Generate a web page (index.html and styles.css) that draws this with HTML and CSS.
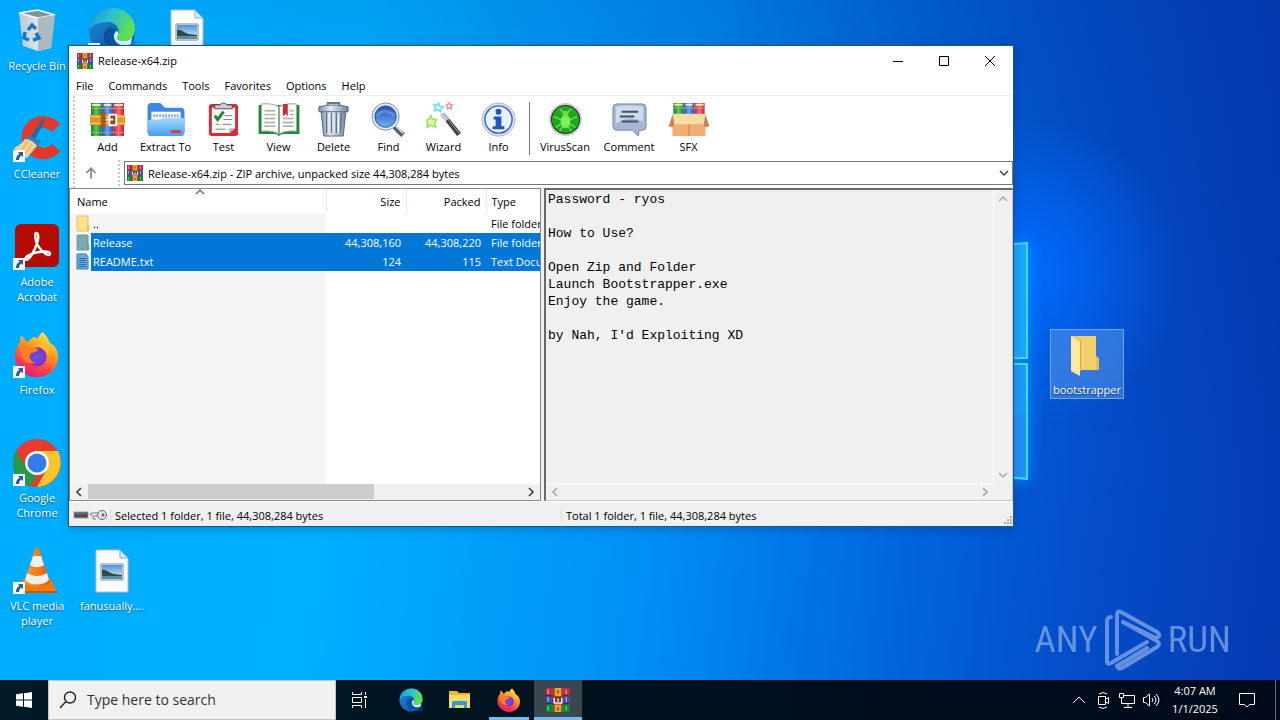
FILE: index.html
```html
<!DOCTYPE html>
<html lang="en">
<head>
<meta charset="utf-8">
<title>Release-x64.zip</title>
<link rel="stylesheet" href="styles.css">
</head>
<body>
<svg class="defs" aria-hidden="true">
  <defs>
    <linearGradient id="gBlue" x1="0" y1="0" x2="0" y2="1"><stop offset="0" stop-color="#a5ddff"/><stop offset="1" stop-color="#4a9df0"/></linearGradient>
    <linearGradient id="gMetal" x1="0" y1="0" x2="1" y2="0"><stop offset="0" stop-color="#7d91a8"/><stop offset=".4" stop-color="#e2eaf1"/><stop offset="1" stop-color="#71859c"/></linearGradient>
    <linearGradient id="gEdgeA" x1="0" y1="0" x2="1" y2=".4"><stop offset="0" stop-color="#1b8fd8"/><stop offset=".5" stop-color="#2cc0d2"/><stop offset="1" stop-color="#62e04e"/></linearGradient>
    <linearGradient id="gEdgeB" x1="0" y1="0" x2="1" y2="1"><stop offset="0" stop-color="#1b8ede"/><stop offset="1" stop-color="#0c4a94"/></linearGradient>
    <linearGradient id="gFox" x1=".8" y1="0" x2=".3" y2="1"><stop offset="0" stop-color="#fff04a"/><stop offset=".4" stop-color="#ff9a1e"/><stop offset=".75" stop-color="#ff3c4a"/><stop offset="1" stop-color="#e31587"/></linearGradient>
    <radialGradient id="gGlobe"><stop offset="0" stop-color="#5a5ae8"/><stop offset="1" stop-color="#8a2cc8"/></radialGradient>
    <linearGradient id="gCone" x1="0" y1="0" x2="1" y2="0"><stop offset="0" stop-color="#ffa02a"/><stop offset="1" stop-color="#e65c00"/></linearGradient>
    <linearGradient id="gLens" x1="0" y1="0" x2="0" y2="1"><stop offset="0" stop-color="#1f50b4"/><stop offset="1" stop-color="#74aef4"/></linearGradient>
    <linearGradient id="gSky" x1="0" y1="0" x2="0" y2="1"><stop offset="0" stop-color="#4f93e0"/><stop offset="1" stop-color="#e6f3fa"/></linearGradient>
    <linearGradient id="gBin" x1="0" y1="0" x2="1" y2="0"><stop offset="0" stop-color="#b9c9d6"/><stop offset=".6" stop-color="#e2e9ee"/><stop offset="1" stop-color="#a3afb8"/></linearGradient>
    <linearGradient id="gRed" x1="0" y1="0" x2="1" y2="0"><stop offset="0" stop-color="#c01838"/><stop offset=".5" stop-color="#ff6b80"/><stop offset="1" stop-color="#c01838"/></linearGradient>
    <linearGradient id="gGrn" x1="0" y1="0" x2="1" y2="0"><stop offset="0" stop-color="#137a2a"/><stop offset=".5" stop-color="#4fce62"/><stop offset="1" stop-color="#137a2a"/></linearGradient>
    <linearGradient id="gBlu" x1="0" y1="0" x2="1" y2="0"><stop offset="0" stop-color="#1b4cb4"/><stop offset=".5" stop-color="#64a4ff"/><stop offset="1" stop-color="#1b4cb4"/></linearGradient>
    <symbol id="rar" viewBox="0 0 16 16">
      <rect y="0" width="16" height="5" fill="#c52a45"/><rect y="5.300" width="16" height="5" fill="#3954ad"/><rect y="10.600" width="16" height="5.400" fill="#16823a"/>
      <path d="M1 1h1v3H1zM13 1h1v3h-1z" fill="#e89a72"/><path d="M1 6h1v3H1zM13 6h1v3h-1z" fill="#92a5e8"/><path d="M1 12h1v3H1zM13 12h1v3h-1z" fill="#4fd26b"/>
      <path d="M0 5.100h16M0 10.400h16" stroke="#43233d" stroke-width=".7"/>
      <path d="M5 0h6v16H5z" fill="#a85a19"/><path d="M6 0h4v16H6z" fill="#e8a33c"/>
      <path d="M4.500 5.500h7V11h-7z" fill="#7c3324"/><path d="M5.500 6.500V10h5V6.500M8 7v2" fill="none" stroke="#f6eee2"/>
      <path d="M8 1.500v2M8 13v2" stroke="#8b3e08"/>
    </symbol>
    <symbol id="edge" viewBox="0 0 48 48">
      <circle cx="24" cy="24" r="23" fill="url(#gEdgeB)"/>
      <path d="M1 23C3 8 15 1 25 1c13 0 22 10 22 21 0 8-6 12-12 12-4 0-7-2-6-4 5-7-1-15-9-15C11 15 4 18 1 23z" fill="url(#gEdgeA)"/>
      <path d="M19 22c-7 7-2 20 9 23 7 1 13-2 17-8-8 5-20 2-20-8 0-3 1-4 3-5-2-4-6-5-9-2z" fill="#0b5299"/>
      <path d="M27 22c-6 3-4 13 8 14 6 0 10-2 12-6v17H35C20 42 16 29 27 22z" fill="#0c5cad" opacity=".4"/>
      <path d="M29 30c-1 2 2 4 6 4 3 0 7-1 9-4l-1 7c-8 4-17 0-17-8 0-3 2-5 3-5 2 2 2 4 0 6z" fill="#d9f6fb"/>
    </symbol>
    <symbol id="fox" viewBox="0 0 48 48">
      <path d="M30 1c4 4 6 7 7 11 6 3 9 9 9 15 0 12-10 21-22 21S1 38 1 26c0-6 2-11 5-14l1-7c3 1 5 4 6 7l6-5c2-1 5 0 6 1 1-3 2-5 5-7z" fill="url(#gFox)"/>
      <circle cx="24" cy="27" r="10" fill="url(#gGlobe)"/>
      <path d="M4 16c7-2 11 0 14 1 5 0 6 1 7 3-3 3-6 2-8 4-2 3 0 8 5 9-8 3-15-3-15-11" fill="#ff7e1f"/>
      <path d="M22 16c7-1 12 3 13 10 2-4 2-9-2-13" fill="#ffbd2c"/>
    </symbol>
    <symbol id="shortcut" viewBox="0 0 12 12"><path d="M0 0h12v12H0z" fill="#f8fafc"/><path d="M5 2h5v5L8.300 5.400C6.500 7 6 8 6 10H3C3 7 4 5.300 6.600 3.700z" fill="#2459a4"/></symbol>
    <symbol id="picture" viewBox="0 0 48 48">
      <path d="M8 3h24l8 8v34H8z" fill="#fbfcfd" stroke="#b1bdc5"/><path d="M32 3v8h8z" fill="#d6e7f2" stroke="#8fb0c4"/>
      <path d="M13 17h22v16H13z" fill="#fff" stroke="#738ba0"/><path d="M14 18h20v14H14z" fill="url(#gSky)"/>
      <path d="M14 23c4-1 7 3 12 4l8 1v1H14z" fill="#2c4c44"/><path d="M14 29h20v3H14z" fill="#5c8eaa"/>
    </symbol>
    <symbol id="books" viewBox="0 0 36 36">
      <path d="M1 1h11v34H1z" fill="url(#gGrn)"/><path d="M12 1h12v34H12z" fill="url(#gBlu)"/><path d="M24 1h11v34H24z" fill="url(#gRed)"/>
      <path d="M2 2h9v2H2zM14 2h8v2h-8zM25 2h9v2h-9z" fill="#eee6ae"/><path d="M1 6h34v1H1zM1 31h34v1H1z" fill="#d3a843"/>
    </symbol>
    <symbol id="up" viewBox="0 0 12 12"><path d="M2 8l4-4 4 4" fill="none" stroke="currentColor" stroke-width="1.500"/></symbol>
    <symbol id="down" viewBox="0 0 12 12"><path d="M2 4l4 4 4-4" fill="none" stroke="currentColor" stroke-width="1.500"/></symbol>
    <symbol id="left" viewBox="0 0 12 12"><path d="M8 2L4 6l4 4" fill="none" stroke="currentColor" stroke-width="1.700"/></symbol>
    <symbol id="right" viewBox="0 0 12 12"><path d="M4 2l4 4-4 4" fill="none" stroke="currentColor" stroke-width="1.700"/></symbol>
  </defs>
</svg>

<main class="desktop">
  <svg class="logo-panes" viewBox="0 0 40 240" aria-hidden="true">
    <path d="M0 5l39-3v115H0z" fill="#18a8f7" stroke="#40dcff" stroke-width="2"/>
    <path d="M0 123h39v115l-39-3z" fill="#1c9bf8" stroke="#40dcff" stroke-width="2"/>
    <path d="M0 176l38-3v62l-38-2z" fill="#2389f3" opacity=".5"/>
  </svg>

  <div class="icons">
    <button class="shortcut c1 r1"><svg viewBox="0 0 48 48"><path d="M6 6l19-3 17 5-4 33-13 3-15-5z" fill="url(#gBin)"/><path d="M6 6l19 5 17-3-17-5z" fill="#82929c" stroke="#eff8fc" stroke-width="1.500"/><path d="M25 11v33l13-3 4-33z" fill="#adb9c1"/><path d="M15 23l4-5 4 4M12 25l-1 6 5 2m4 0l6-2-3-5" fill="none" stroke="#1676c8" stroke-width="3.500"/></svg><span>Recycle Bin</span></button>
    <button class="shortcut c2 r1" aria-label="Edge"><svg viewBox="0 0 48 48"><use href="#edge"/><use href="#shortcut" y="36" width="12" height="12"/></svg></button>
    <button class="shortcut c3 r1" aria-label="Image"><svg viewBox="0 0 48 48"><use href="#picture"/></svg></button>
    <button class="shortcut c1 r2"><svg viewBox="0 0 48 48"><path d="M47 9C38-3 15-1 10 15c-6 18 8 31 23 29 6-1 11-4 14-8l-8-7c-7 8-20 2-19-8 1-9 14-11 19-4z" fill="#e3382b"/><path d="M29 4l3 1-10 19-4-2z" fill="#216b9e"/><path d="M16 20l12 6-4 6-12-6z" fill="#2c83bf"/><path d="M12 24c5 0 9 3 12 7L14 43C8 41 4 37 1 33c5-2 8-5 11-9z" fill="#f5d28e"/><path d="M15 26L7 38M19 29l-9 12" stroke="#d7a85b"/><use href="#shortcut" y="35" width="12" height="12"/></svg><span>CCleaner</span></button>
    <button class="shortcut c1 r3"><svg viewBox="0 0 48 48"><rect x="2" y="1" width="44" height="43" rx="6" fill="#b30b00"/><path d="M23 10c5 0 1 14-5 23-5 7-9 3-2-1 8-4 22-5 21-1-1 4-12-5-14-13-1-4-1-8 0-8z" fill="none" stroke="#fff" stroke-width="2.400"/><use href="#shortcut" y="35" width="12" height="12"/></svg><span>Adobe Acrobat</span></button>
    <button class="shortcut c1 r4"><svg viewBox="0 0 48 48"><use href="#fox" x="1" width="46" height="46"/><use href="#shortcut" y="35" width="12" height="12"/></svg><span>Firefox</span></button>
    <button class="shortcut c1 r5"><svg viewBox="0 0 48 48"><circle cx="24" cy="24" r="24" fill="#e63b2e"/><path d="M3 12l11 18 10 6-7 11C3 45-5 26 3 12z" fill="#27994a"/><path d="M45 12H24l10 18-10 18c18-1 29-19 21-36z" fill="#fbc42d"/><circle cx="24" cy="24" r="12" fill="#fff"/><circle cx="24" cy="24" r="9.500" fill="#327be8"/><use href="#shortcut" y="35" width="12" height="12"/></svg><span>Google Chrome</span></button>
    <button class="shortcut c1 r6"><svg viewBox="0 0 48 48"><path d="M10 32h28l6 14H5z" fill="#f37812"/><path d="M22 2q2-2 4 0l11 34q-12 8-26 0z" fill="url(#gCone)"/><path d="M20 9h8l3 9c-4 3-10 3-14 0zM14 26c6 4 14 4 20 0l2 7c-6 6-18 6-24 0z" fill="#f0eeeb"/><path d="M5 45h39" stroke="#c85808" stroke-width="2"/><use href="#shortcut" y="35" width="12" height="12"/></svg><span>VLC media player</span></button>
    <button class="shortcut c2 r6"><svg viewBox="0 0 48 48"><use href="#picture"/></svg><span>fanusually....</span></button>
  </div>

  <button class="shortcut selected"><svg viewBox="0 0 48 48"><path d="M9 3h24v34H9z" fill="#f3cf69"/><path d="M33 23l3 2v12h-3z" fill="#eabd4c"/><path d="M11 4l7 4v30h-7z" fill="#cca84c"/><path d="M8 3l9 5v35l-9-5z" fill="#ffe8a0"/></svg><span>bootstrapper</span></button>

  <section class="window" aria-label="Release-x64.zip">
    <header class="titlebar">
      <svg class="i16"><use href="#rar"/></svg><h1>Release-x64.zip</h1>
      <button aria-label="Minimize"><svg viewBox="0 0 12 12"><path d="M1 6.500h10"/></svg></button>
      <button aria-label="Maximize"><svg viewBox="0 0 12 12"><path d="M1.500 1.500h9v9h-9z"/></svg></button>
      <button aria-label="Close"><svg viewBox="0 0 12 12"><path d="M1 1l10 10M11 1L1 11"/></svg></button>
    </header>
    <nav class="menu"><button>File</button><button>Commands</button><button>Tools</button><button>Favorites</button><button>Options</button><button>Help</button></nav>

    <div class="toolbar">
      <button class="tool"><svg viewBox="0 0 36 36"><use href="#books"/><path d="M0 13h36v11H0z" fill="#e4942a"/><path d="M0 15h36M0 22h36" stroke="#ffda75"/><path d="M11 11h5v15h-5z" fill="#a65b13"/><path d="M20 13h7v11h-7z" fill="#8a4b16" stroke="#fff" stroke-width="2"/><path d="M17 18h7" stroke="#fff" stroke-width="2"/></svg>Add</button>
      <button class="tool wide"><svg class="book" viewBox="0 0 38 36"><path d="M0 5q0-4 4-4h9l5 5h16q4 0 4 4v21H0z" fill="#3f85e6"/><path d="M4 10h30v12H4z" fill="#f9fcff"/><path d="M6 14h26" stroke="#98adc4" stroke-width="3" stroke-dasharray="2 1"/><path d="M0 22q0-4 4-4h9l4-2h17q4 0 4 4v11q0 4-4 4H4q-4 0-4-4z" fill="url(#gBlue)"/><path d="M24 29h10v3H24z" fill="#e5382d"/></svg>Extract To</button>
      <button class="tool"><svg viewBox="0 0 36 36"><rect x="3" y="2" width="30" height="33" rx="3" fill="#d52b3d"/><path d="M6 6h24v21l-6 5H6z" fill="#f9f9f6"/><path d="M30 27h-6v5z" fill="#b8bab9"/><path d="M9 7V3h5q4-4 8 0h5v4z" fill="#c8ccd1" stroke="#52505b"/><path d="M9 14l3 4 6-8" fill="none" stroke="#21823b" stroke-width="3"/><path d="M19 14h8M18 18h9M10 23h4M17 23h9M10 28h10" stroke="#7e8283"/></svg>Test</button>
      <button class="tool"><svg class="book" viewBox="0 0 42 36"><path d="M0 3h42v30H24l-3 2-3-2H0z" fill="#208b37"/><path d="M3 2q12-1 18 3 6-4 18-3v28q-12-1-18 3-6-4-18-3z" fill="#fafaf5" stroke="#9ea49e"/><path d="M21 5v28" stroke="#989d9c" stroke-width="2"/><path d="M6 9h11M6 13h11M6 17h11M6 21h11M6 25h11M25 17h11M25 21h11M25 25h11M32 9h4M32 13h4" stroke="#a8adb0" stroke-width="1.500"/><path d="M25 2h5v13l-2-3-3 3z" fill="#c52c3b"/></svg>View</button>
      <button class="tool"><svg viewBox="0 0 36 36"><path d="M5 8h26l-3 27H8z" fill="url(#gMetal)" stroke="#56677c"/><path d="M11 11v21M16 11v21M21 11v21M26 11l-1 21" stroke="#60738a" stroke-width="1.500"/><path d="M13 11v21M18 11v21M23 11v21" stroke="#e4edf5" stroke-width="2"/><path d="M3 5q15-4 30 0v5H3z" fill="url(#gMetal)" stroke="#53667b"/><path d="M12 3V1h12v2" fill="none" stroke="#68788a" stroke-width="2"/></svg>Delete</button>
      <button class="tool"><svg viewBox="0 0 36 36"><path d="M23 22l12 10-4 4-11-11z" fill="#59606d"/><path d="M25 24l8 8" stroke="#d9dee3" stroke-width="2"/><circle cx="15" cy="15" r="14" fill="#e1e9f4" stroke="#7e91b1"/><circle cx="15" cy="15" r="11" fill="url(#gLens)" stroke="#2453a4"/><path d="M6 14q8-9 18 0" fill="none" stroke="#91baf3" opacity=".4" stroke-width="3"/></svg>Find</button>
      <button class="tool"><svg viewBox="0 0 36 36"><path d="M15 13l4-2 17 21-4 3z" fill="#3e4148"/><path d="M15 13l4-2 5 6-4 3z" fill="#c9cdd1"/><path d="M18 12l16 20" stroke="#a0a4aa"/><g fill="none" stroke-width="1.500"><path d="M13 1l1 3 4 1-3 2v3l-3-2-3 1 1-3-2-3h4z" stroke="#69d9ef" fill="#d8f6fb"/><path d="M24 1l1 2h2l-1 2v2l-2-1-2 1v-2l-1-2 2-1z" stroke="#f18d9b"/><path d="M5 14l2 4h4l-2 4 1 4-5-2-4 2 1-4-3-3 4-1z" stroke="#9dde61" fill="#daf7aa"/></g></svg>Wizard</button>
      <button class="tool"><svg viewBox="0 0 36 36"><circle cx="18" cy="18" r="17" fill="#dce2ee" stroke="#a8b3cb"/><circle cx="18" cy="18" r="14" fill="#eaf2ff" stroke="#3565c8" stroke-width="1.500"/><circle cx="18" cy="10" r="3" fill="#2453bb"/><path d="M13 15h8v10h3v3H12v-3h3v-7h-2z" fill="#2453bb"/></svg>Info</button>
      <hr>
      <button class="tool wider"><svg viewBox="0 0 36 36"><circle cx="18" cy="18" r="16" fill="#222f25" stroke="#cbd2cc" stroke-width="2"/><circle cx="18" cy="18" r="14" fill="#23a524"/><path d="M12 7l6 6 6-6M6 15l7 3h10l7-3M8 26l6-4h8l6 4M12 30l3-5M24 30l-3-5" fill="none" stroke="#5fe44d" stroke-width="1.500"/><ellipse cx="18" cy="20" rx="5" ry="7" fill="#80ef59"/><circle cx="18" cy="12" r="3" fill="#66df49"/></svg>VirusScan</button>
      <button class="tool wider"><svg viewBox="0 0 36 36"><path d="M5 2h26q4 0 4 4v19q0 4-4 4h-3l-1 6-6-6H5q-4 0-4-4V6q0-4 4-4z" fill="#a6b8d1" stroke="#7188a8"/><path d="M4 5q10-3 28 0v15q-14-7-28 2z" fill="#cedbea"/><path d="M10 10h17M8 15h15M10 20h17" stroke="#42536e" stroke-width="2"/></svg>Comment</button>
      <button class="tool"><svg class="book" viewBox="0 0 42 36"><use href="#books" x="4" y="0" width="34" height="34"/><path d="M4 13h34v22H4z" fill="#f3ad74"/><path d="M4 13l-4 12 4 1 3-5h28l3 5 4-1-4-12z" fill="#c98454"/><path d="M4 12h34l-2 11H6z" fill="#f8dda2"/><path d="M21 23v12" stroke="#c88050"/></svg>SFX</button>
    </div>

    <div class="address">
      <button class="go-up" aria-label="Up one level"><svg viewBox="0 0 12 12"><path d="M6 11V2M2 6l4-4 4 4" fill="none" stroke="#888" stroke-width="1.500"/></svg></button>
      <label class="combo"><svg class="i16"><use href="#rar"/></svg><select aria-label="Address"><option>Release-x64.zip - ZIP archive, unpacked size 44,308,284 bytes</option></select><svg class="arrow"><use href="#down"/></svg></label>
    </div>

    <div class="panes">
      <div class="files">
        <svg class="sort"><use href="#up"/></svg>
        <table>
          <colgroup><col><col class="num"><col class="num"><col class="type"></colgroup>
          <thead><tr><th>Name</th><th>Size</th><th>Packed</th><th>Type</th></tr></thead>
          <tbody>
            <tr><td><div class="name"><svg viewBox="0 0 14 17"><path d="M1 1h11v15H1z" fill="#ffe28d" stroke="#e8c15a"/><path d="M11 10h2v6h-2z" fill="#edc451"/></svg><span>..</span></div></td><td></td><td></td><td>File folder</td></tr>
            <tr class="picked"><td><div class="name"><svg viewBox="0 0 14 17"><path d="M1 1h11v15H1z" fill="#78aaad" stroke="#669ca8"/><path d="M11 10h2v6h-2z" fill="#6b9e85"/></svg><span>Release</span></div></td><td>44,308,160</td><td>44,308,220</td><td>File folder</td></tr>
            <tr class="picked"><td><div class="name"><svg viewBox="0 0 14 17"><path d="M1 1h9l2 3v12H1z" fill="#6daae4" stroke="#347bb9"/><path d="M3 5.500h7M3 7.500h7M3 9.500h7M3 11.500h7M3 13.500h7" stroke="#316ca7"/></svg><span>README.txt</span></div></td><td>124</td><td>115</td><td>Text Document</td></tr>
          </tbody>
        </table>
        <div class="hscroll"><button aria-label="Scroll left"><svg><use href="#left"/></svg></button><div class="track"><div class="thumb"></div></div><button aria-label="Scroll right"><svg><use href="#right"/></svg></button></div>
      </div>
      <div class="comment">
        <textarea readonly spellcheck="false" aria-label="Archive comment">Password - ryos

How to Use?

Open Zip and Folder
Launch Bootstrapper.exe
Enjoy the game.

by Nah, I'd Exploiting XD</textarea>
        <div class="vscroll"><button aria-label="Scroll up"><svg><use href="#up"/></svg></button><button aria-label="Scroll down"><svg><use href="#down"/></svg></button></div>
        <div class="hscroll off"><button aria-label="Scroll left"><svg><use href="#left"/></svg></button><div class="track"></div><button aria-label="Scroll right"><svg><use href="#right"/></svg></button></div>
      </div>
    </div>

    <footer class="status">
      <div class="lamps"><svg viewBox="0 0 36 14"><rect x="1" y="3" width="14" height="6" fill="#454b50" stroke="#9da1a5"/><path d="M3 5h10" stroke="#798087"/><circle cx="29" cy="6" r="4.500" fill="#e1e2e2" stroke="#676767"/><circle cx="30" cy="6" r="1.500" fill="#666"/><path d="M25 4h-6l-2 1 2 2h6M20 8v2h3" fill="none" stroke="#777"/></svg></div>
      <div class="sel">Selected 1 folder, 1 file, 44,308,284 bytes</div>
      <div class="total">Total 1 folder, 1 file, 44,308,284 bytes</div>
      <svg class="grip" viewBox="0 0 12 12"><path d="M9 2h2v2H9zM6 5h2v2H6zM9 5h2v2H9zM3 8h2v2H3zM6 8h2v2H6zM9 8h2v2H9z" fill="#aaa"/></svg>
    </footer>
  </section>

  <div class="brand">
    <span>ANY</span>
    <svg viewBox="0 0 56 64" fill="none" stroke="currentColor" stroke-width="4" stroke-linejoin="round" stroke-linecap="round"><path d="M12 46V7q0-5 4-3l36 20q4 3 1 5l-2 1L18 14"/><path d="M6 9q-4 0-4 5v39q0 4 4 2l36-21"/><path d="M18 14l34 19q4 3 0 6L17 60q-4 2-5-2l30-18"/></svg>
    <span>RUN</span>
  </div>
</main>

<footer class="taskbar">
  <button class="start" aria-label="Start"><svg viewBox="0 0 16 16" fill="#fff"><path d="M0 2.300L7 1.300v6.200H0zM8 1.200L16 0v7.500H8zM0 8.500h7v6.200l-7-1zM8 8.500h8V16l-8-1.200z"/></svg></button>
  <label class="search"><svg viewBox="0 0 18 18"><circle cx="11" cy="6.500" r="5.500" fill="none" stroke="#222" stroke-width="1.400"/><path d="M7 10.500L1 17" stroke="#222" stroke-width="1.400"/></svg><input type="text" placeholder="Type here to search" aria-label="Search"></label>
  <button class="task view" aria-label="Task View"><svg class="small" viewBox="0 0 18 18" fill="none" stroke="#fff"><path d="M1.500 1v2.500h9V1M1.500 6.500h9v5h-9zM1.500 17v-2.500h9V17M14.500 1v3M14.500 8v9"/><path d="M13 5h3v2h-3z" fill="#fff" stroke="none"/></svg></button>
  <button class="task" aria-label="Edge"><svg><use href="#edge"/></svg></button>
  <button class="task" aria-label="File Explorer"><svg viewBox="0 0 24 24"><path d="M1 3h8l2 2h11v15H1z" fill="#efb52d"/><path d="M1 7h21v13H1z" fill="#ffda62"/><path d="M4 20v-6q0-1 2-1h12q1 0 1 1v6h-3v-3H7v3z" fill="#2f9be5"/></svg></button>
  <button class="task running" aria-label="Firefox"><svg><use href="#fox"/></svg></button>
  <button class="task running active" aria-label="WinRAR"><svg><use href="#rar"/></svg></button>
  <div class="tray">
    <button aria-label="Show hidden icons"><svg viewBox="0 0 18 18"><path d="M3 12l6-6 6 6"/></svg></button>
    <button aria-label="Meet now"><svg viewBox="0 0 18 18"><path d="M4.500 5.500h7v8h-7zM11.500 8l3-1.500v6l-3-1.500M5 3q4-3 8 0M5 16q4 3 8 0"/></svg></button>
    <button aria-label="Network"><svg viewBox="0 0 18 18"><path d="M5 4.500h11.500v8H3.500V8M10 12.500v4M6 16.500h8M1.500 2.500h4v4h-4zM3.500 7v3"/></svg></button>
    <button aria-label="Volume"><svg viewBox="0 0 18 18"><path d="M1.500 6.500h2l4-3.500v12l-4-3.500h-2zM10 7q2 2 0 4M12 5q4 4 0 8M14 3q6 6 0 12"/></svg></button>
    <time datetime="2025-01-01T04:07">4:07 AM<br>1/1/2025</time>
    <button class="notify" aria-label="Notifications"><svg viewBox="0 0 18 18"><path d="M1.500 2.500h15v11h-5L9 16l-2.500-2.500h-5z"/></svg></button>
    <button class="peek" aria-label="Show desktop"></button>
  </div>
</footer>
</body>
</html>
```
FILE: styles.css
```css
* { box-sizing: border-box; }
body {
  margin: 0;
  height: 100vh;
  display: flex;
  flex-direction: column;
  overflow: hidden;
  font: 11px/15px "Open Sans", "Noto Sans", sans-serif;
  color: #000;
}
button, input, select, textarea { font: inherit; color: inherit; border: 0; padding: 0; margin: 0; background: none; outline: 0; border-radius: 0; }
button { display: flex; align-items: center; justify-content: center; }
svg { display: block; flex: none; }
.defs { position: absolute; width: 0; height: 0; }
.i16 { width: 16px; height: 16px; }

/* Desktop */
.desktop {
  flex: 1;
  min-height: 0;
  position: relative;
  background:
    radial-gradient(circle at 80% 40%, #006aff 0, rgba(0, 106, 255, 0) 14%),
    linear-gradient(200deg, rgba(0, 40, 140, .35), rgba(0, 40, 140, 0) 45%),
    linear-gradient(97deg, #00adff, #00b0ff 28%, #0090f5 52%, #0068dd 70%, #0450cc 83%, #0539b2 100%);
}
.logo-panes { position: absolute; left: 988px; top: 241px; width: 40px; height: 240px; filter: drop-shadow(0 0 8px #0094ff); }
.icons {
  display: grid;
  grid-template-columns: repeat(3, 75px);
  grid-template-rows: repeat(6, 108px);
}
.c1 { grid-column: 1; } .c2 { grid-column: 2; } .c3 { grid-column: 3; }
.r1 { grid-row: 1; } .r2 { grid-row: 2; } .r3 { grid-row: 3; } .r4 { grid-row: 4; } .r5 { grid-row: 5; } .r6 { grid-row: 6; }
.shortcut {
  flex-direction: column;
  justify-content: flex-start;
  gap: 3px;
  width: 74px;
  padding: 7px 4px 0;
  color: #fff;
  text-shadow: 0 1px 2px rgba(0, 0, 0, .6);
}
.shortcut svg { width: 48px; height: 48px; }
.c1 span { max-width: 66px; }
.c1.r1 span { white-space: nowrap; }
.c1.r3 span, .c1.r5 span { max-width: 46px; }
.selected {
  position: absolute;
  right: 156px;
  top: 329px;
  height: 70px;
  padding-top: 3px;
  gap: 1px;
  background: rgba(93, 153, 234, .5);
  border: 1px solid #69a7ee;
}

/* Archive window */
.window {
  position: absolute;
  inset: 45px 266px 153px 68px;
  display: flex;
  flex-direction: column;
  border: 1px solid #16548a;
  background: #fff;
  box-shadow: 0 2px 8px rgba(0, 20, 80, .25);
}
.titlebar { display: flex; align-items: center; height: 29px; padding: 0 0 0 8px; gap: 5px; }
.titlebar h1 { flex: 1; margin: 0; font-size: 11px; font-weight: 400; }
.titlebar button { width: 41px; height: 29px; }
.titlebar button:last-child { margin-right: 3px; }
.titlebar svg:not(.i16) { width: 12px; height: 12px; fill: none; stroke: #000; }
.menu { display: flex; gap: 15px; height: 21px; padding-left: 7px; border-bottom: 1px solid #eee; }
.toolbar {
  display: flex;
  height: 62px;
  margin-left: 4px;
  padding: 6px 0 0 5px;
  border-left: 2px dotted #c5cbc5;
}
.tool { flex-direction: column; justify-content: flex-start; width: 55px; gap: 2px; white-space: nowrap; }
.tool svg { width: 35px; height: 35px; }
.tool svg.book { width: 42px; }
.tool.wide svg.book { width: 38px; }
.wide { width: 61px; }
.wider { width: 64px; }
.toolbar hr { width: 1px; height: 53px; margin: 0 3px 0 3px; border: 0; background: #777; }
.address { display: flex; align-items: center; height: 30px; margin-left: 4px; border-left: 2px dotted #c5cbc5; }
.go-up { width: 45px; height: 26px; padding-right: 12px; border-right: 2px dotted #c5cbc5; }
.go-up svg { width: 14px; height: 14px; }
.combo { flex: 1; display: flex; align-items: center; gap: 5px; height: 24px; margin-left: 4px; padding: 0 2px; border: 1px solid #777; }
.combo select { flex: 1; min-width: 0; appearance: none; }
.arrow { width: 12px; height: 12px; color: #444; }

.panes { flex: 1; min-height: 0; display: grid; grid-template-columns: minmax(0, 1fr) 469px; gap: 3px; background: #f0f0f0; }
.files {
  position: relative;
  display: flex;
  flex-direction: column;
  overflow: hidden;
  border: 1px solid #828790;
  background: linear-gradient(#f5f5f5, #f5f5f5) left / calc(100% - 214px) 100% no-repeat #fff;
}
.sort { position: absolute; left: 124px; top: -3px; width: 12px; height: 12px; color: #777; }
table { width: 100%; table-layout: fixed; border-collapse: collapse; }
.num { width: 80px; }
.type { width: 54px; }
th, td { padding: 0 5px; overflow: hidden; text-align: right; white-space: nowrap; font-weight: 400; }
th { height: 25px; background: #fff; border-right: 1px solid #e8e8e8; }
td { height: 19px; }
th:first-child { text-align: left; padding-left: 7px; }
th:last-child, td:last-child { text-align: left; padding-right: 0; }
th:last-child { border: 0; }
td:first-child { padding: 0; text-align: left; }
.name { display: flex; align-items: center; gap: 1px; height: 19px; padding-left: 6px; }
.name svg { width: 14px; height: 17px; }
.name span { flex: 1; padding-left: 2px; line-height: 19px; }
.picked td { color: #fff; background: #0078d7; }
.picked td:first-child { background: #f5f5f5; }
.picked .name span { background: #0078d7; }

.hscroll { display: flex; height: 16px; margin-top: auto; background: #f0f0f0; color: #444; }
.hscroll button { width: 18px; height: 16px; }
.hscroll svg, .vscroll svg { width: 12px; height: 12px; }
.track { flex: 1; }
.thumb { width: 66%; height: 15px; background: #cdcdcd; }
.comment {
  display: grid;
  grid-template: minmax(0, 1fr) 16px / minmax(0, 1fr) 18px;
  border: 1px solid #c8c8c8;
  border-top: 2px solid #696969;
  border-left: 2px solid #696969;
  background: #f0f0f0;
}
textarea { resize: none; overflow: hidden; padding: 1px 2px; font: 13px/17px "Liberation Mono", monospace; border: solid #fff; border-width: 0 1px 1px 0; }
.vscroll { display: flex; flex-direction: column; justify-content: space-between; color: #aaa; }
.vscroll button { height: 18px; }
.off { color: #aaa; margin: 0; }

.status { position: relative; display: flex; align-items: center; height: 25px; padding-top: 3px; border-top: 1px solid #fff; background: #f0f0f0; }
.lamps { width: 42px; padding-left: 4px; border-right: 1px solid #ddd; }
.lamps svg { width: 36px; height: 14px; }
.sel { flex: 1; padding-left: 4px; }
.total { width: 452px; padding-left: 4px; border-left: 1px solid #ddd; }
.grip { position: absolute; right: 0; bottom: 0; width: 12px; height: 12px; }

.brand {
  position: absolute;
  right: 49px;
  bottom: 8px;
  display: flex;
  align-items: center;
  gap: 7px;
  height: 64px;
  color: #7da4e6;
  opacity: .8;
  font: 37px/48px "Liberation Sans Narrow", "Roboto Condensed", Roboto, sans-serif;
}
.brand svg { width: 56px; height: 64px; }

/* Taskbar */
.taskbar { display: flex; height: 40px; background: linear-gradient(90deg, #001a26, #00101c 60%, #000a1a); color: #fff; }
.start { width: 48px; }
.start svg { width: 16px; height: 16px; }
.search { display: flex; align-items: center; gap: 10px; width: 288px; padding-left: 10px; background: #f1f1f1; border: 1px solid #c4c4c4; }
.search svg { width: 18px; height: 18px; }
.search input { flex: 1; min-width: 0; font-size: 14px; line-height: 20px; }
.search input::placeholder { color: #333; opacity: 1; }
.task { width: 48px; margin-right: 1px; border: solid transparent; border-width: 3px 0; }
.task svg { width: 24px; height: 24px; }
.task svg.small { width: 18px; height: 18px; }
.task.view { margin-right: 3px; }
.running { background: linear-gradient(#76b9ed, #76b9ed) center bottom / 40px 3px no-repeat border-box; }
.active { background: #3a474f; border-bottom-color: #76b9ed; }
.tray { display: flex; margin-left: auto; }
.tray button { width: 24px; }
.tray svg { width: 18px; height: 18px; fill: none; stroke: #fff; }
.tray time { width: 64px; padding-top: 2px; line-height: 18px; text-align: center; }
.tray .notify { width: 40px; }
.tray .peek { width: 5px; margin-left: 8px; border-left: 1px solid #66717a; }
```
